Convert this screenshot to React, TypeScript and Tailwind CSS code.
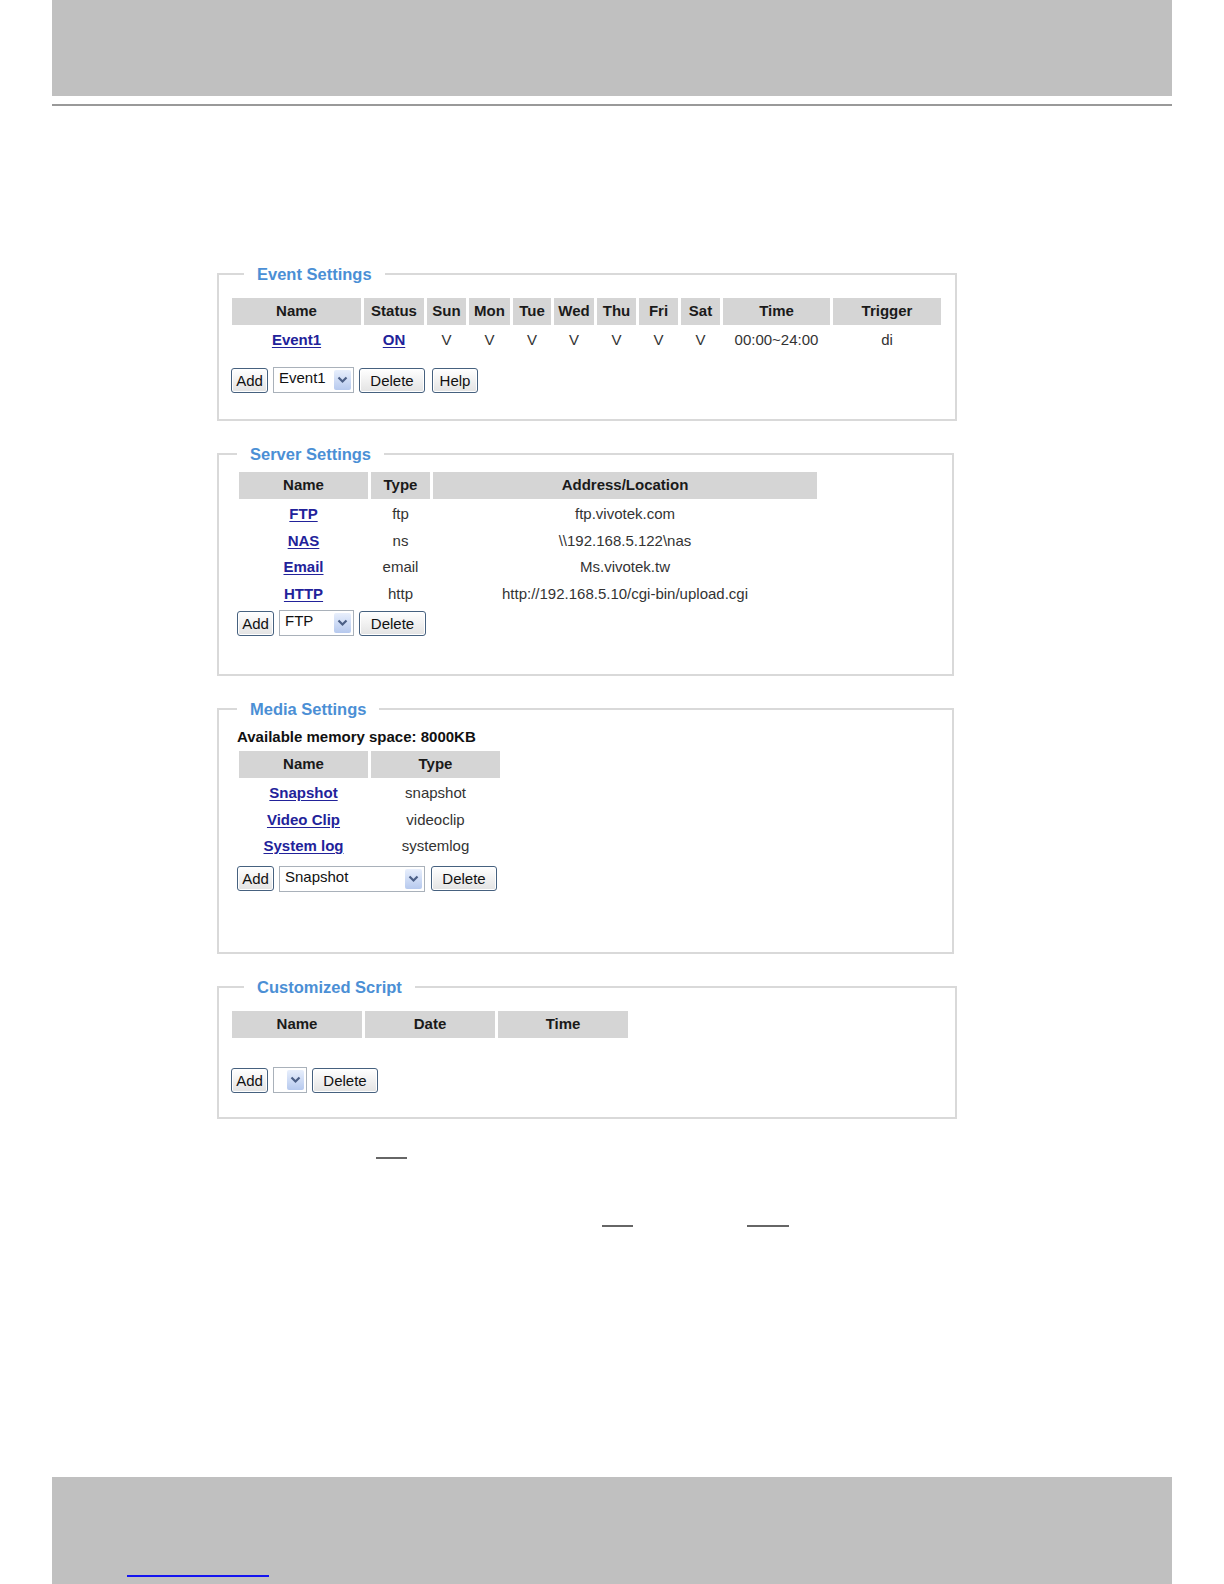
import React from 'react';

const font = "font-['Liberation_Sans',Arial,Helvetica,sans-serif]";

const Head: React.FC<{ children?: React.ReactNode }> = ({ children }) => (
  <div className="h-[27px] bg-[#d5d5d5] flex items-center justify-center text-[15px] font-bold text-[#1a1a1a]">
    {children}
  </div>
);

const Cell: React.FC<{ children?: React.ReactNode; className?: string }> = ({ children, className }) => (
  <div className={`flex items-center justify-center text-[15px] text-[#333] ${className || 'h-[26.5px]'}`}>{children}</div>
);

const Link: React.FC<{ children: React.ReactNode }> = ({ children }) => (
  <a href="#" className="font-bold underline underline-offset-2 text-[#22229a]">
    {children}
  </a>
);

const Btn: React.FC<{ label: string; className: string }> = ({ label, className }) => (
  <button
    className={`h-[25px] rounded-[3px] border border-[#46617f] bg-linear-to-b from-white to-[#e3e3e3] text-[15px] leading-none text-[#111] shadow-[inset_0_0_0_1px_#fff] ${className}`}
  >
    {label}
  </button>
);

const Select: React.FC<{ text?: string; className: string }> = ({ text, className }) => (
  <div
    className={`h-[26px] border border-[#a9b1ba] bg-white flex items-center justify-between pl-[5px] pr-[2px] text-[15px] text-[#111] ${className}`}
  >
    <span className="-mt-[3px]">{text}</span>
    <span className="w-[17px] h-[20px] rounded-[2px] bg-linear-to-b from-[#e8effc] to-[#b6c9ee] flex items-center justify-center">
      <svg width="11" height="8" viewBox="0 0 11 8">
        <polyline points="1.5,1.5 5.5,5.5 9.5,1.5" fill="none" stroke="#4b5f86" strokeWidth="2.2" />
      </svg>
    </span>
  </div>
);

const Legend: React.FC<{ title: string; className: string }> = ({ title, className }) => (
  <legend className={`px-[13px] text-[16.5px] leading-[20px] font-bold text-[#4b8fd5] ${className}`}>
    {title}
  </legend>
);

const days = ['Sun', 'Mon', 'Tue', 'Wed', 'Thu', 'Fri', 'Sat'];

const servers = [
  { name: 'FTP', type: 'ftp', addr: 'ftp.vivotek.com' },
  { name: 'NAS', type: 'ns', addr: '\\\\192.168.5.122\\nas' },
  { name: 'Email', type: 'email', addr: 'Ms.vivotek.tw' },
  { name: 'HTTP', type: 'http', addr: 'http://192.168.5.10/cgi-bin/upload.cgi' },
];

const media = [
  { name: 'Snapshot', type: 'snapshot' },
  { name: 'Video Clip', type: 'videoclip' },
  { name: 'System log', type: 'systemlog' },
];

export default function App() {
  return (
    <div className={`${font} min-h-[1584px] flex flex-col bg-white`}>
      <div className="mx-[52px] h-[96px] bg-[#c0c0c0]" />
      <div className="mx-[52px] mt-[8px] h-[2px] bg-[#999]" />

      <div className="ml-[217px] mt-[158px] flex flex-col">
        {/* Event Settings */}
        <fieldset className="w-[740px] h-[157px] border-2 border-[#d9d9d9] pl-[12px] pt-[14px]">
          <Legend title="Event Settings" className="ml-[13px]" />
          <div className="ml-[1px] grid grid-cols-[129px_60px_39px_41px_38px_40px_39px_39px_39px_107px_108px] gap-x-[3px]">
            <Head>Name</Head>
            <Head>Status</Head>
            {days.map((d) => (
              <Head key={d}>{d}</Head>
            ))}
            <Head>Time</Head>
            <Head>Trigger</Head>
            <Cell className="h-[26px] mt-[2px]">
              <Link>Event1</Link>
            </Cell>
            <Cell className="h-[26px] mt-[2px]">
              <Link>ON</Link>
            </Cell>
            {days.map((d) => (
              <Cell key={d} className="h-[26px] mt-[2px]">
                V
              </Cell>
            ))}
            <Cell className="h-[26px] mt-[2px]">00:00~24:00</Cell>
            <Cell className="h-[26px] mt-[2px]">di</Cell>
          </div>
          <div className="mt-[14px] flex items-center">
            <Btn label="Add" className="w-[37px]" />
            <Select text="Event1" className="ml-[5px] w-[81px]" />
            <Btn label="Delete" className="ml-[5px] w-[66px]" />
            <Btn label="Help" className="ml-[7px] w-[46px]" />
          </div>
        </fieldset>

        {/* Server Settings */}
        <fieldset className="mt-[23px] w-[737px] h-[232px] border-2 border-[#d9d9d9] pl-[18px] pt-[8px]">
          <Legend title="Server Settings" className="ml-0" />
          <div className="ml-[2px] grid grid-cols-[129px_59px_384px] gap-x-[3px]">
            <Head>Name</Head>
            <Head>Type</Head>
            <Head>Address/Location</Head>
            {servers.map((s, i) => (
              <React.Fragment key={s.name}>
                <Cell className={i === 0 ? 'h-[26.5px] mt-[2px]' : 'h-[26.5px]'}>
                  <Link>{s.name}</Link>
                </Cell>
                <Cell className={i === 0 ? 'h-[26.5px] mt-[2px]' : 'h-[26.5px]'}>{s.type}</Cell>
                <Cell className={i === 0 ? 'h-[26.5px] mt-[2px]' : 'h-[26.5px]'}>{s.addr}</Cell>
              </React.Fragment>
            ))}
          </div>
          <div className="mt-[3px] flex items-center">
            <Btn label="Add" className="w-[37px]" />
            <Select text="FTP" className="ml-[5px] w-[75px]" />
            <Btn label="Delete" className="ml-[5px] w-[67px]" />
          </div>
        </fieldset>

        {/* Media Settings */}
        <fieldset className="mt-[23px] w-[737px] h-[255px] border-2 border-[#d9d9d9] pl-[18px] pt-[8px]">
          <Legend title="Media Settings" className="ml-0" />
          <div className="h-[20px] flex items-center text-[15px] font-bold text-[#111]">
            Available memory space: 8000KB
          </div>
          <div className="mt-[4px] ml-[2px] grid grid-cols-[129px_129px] gap-x-[3px] w-max">
            <Head>Name</Head>
            <Head>Type</Head>
            {media.map((m, i) => (
              <React.Fragment key={m.name}>
                <Cell className={i === 0 ? 'h-[26.5px] mt-[2px]' : 'h-[26.5px]'}>
                  <Link>{m.name}</Link>
                </Cell>
                <Cell className={i === 0 ? 'h-[26.5px] mt-[2px]' : 'h-[26.5px]'}>{m.type}</Cell>
              </React.Fragment>
            ))}
          </div>
          <div className="mt-[6px] flex items-center">
            <Btn label="Add" className="w-[37px]" />
            <Select text="Snapshot" className="ml-[5px] w-[146px]" />
            <Btn label="Delete" className="ml-[6px] w-[66px]" />
          </div>
        </fieldset>

        {/* Customized Script */}
        <fieldset className="mt-[23px] w-[740px] h-[142px] border-2 border-[#d9d9d9] pl-[12px] pt-[14px]">
          <Legend title="Customized Script" className="ml-[13px]" />
          <div className="ml-[1px] grid grid-cols-[130px_130px_130px] gap-x-[3px] w-max">
            <Head>Name</Head>
            <Head>Date</Head>
            <Head>Time</Head>
          </div>
          <div className="mt-[29px] flex items-center">
            <Btn label="Add" className="w-[37px]" />
            <Select className="ml-[5px] w-[34px]" />
            <Btn label="Delete" className="ml-[5px] w-[66px]" />
          </div>
        </fieldset>

        <div className="mt-[38px] ml-[159px] w-[31px] h-[2px] bg-[#666]" />
        <div className="mt-[66px] flex">
          <div className="ml-[385px] w-[31px] h-[2px] bg-[#666]" />
          <div className="ml-[114px] w-[42px] h-[2px] bg-[#666]" />
        </div>
      </div>

      <div className="mt-auto mx-[52px] h-[107px] bg-[#c0c0c0] pt-[98px] pl-[75px]">
        <div className="w-[142px] h-[2px] bg-[#1414f0]" />
      </div>
    </div>
  );
}
